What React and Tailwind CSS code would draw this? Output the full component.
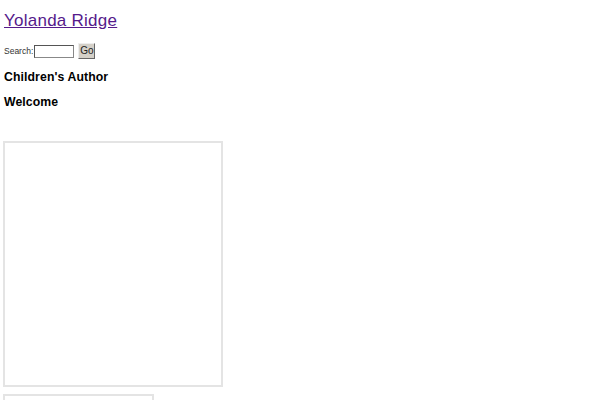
export default function App() {
  return (
    <div className="min-h-[400px] bg-white text-black pl-[4px] pt-[11px] font-['Liberation_Sans',Arial,sans-serif]">
      <h1 className="text-[17px] leading-[20px] font-normal tracking-[0.25px] m-0">
        <a href="#" className="text-[#551a8b] underline">Yolanda Ridge</a>
      </h1>
      <div className="mt-[12px] flex items-center h-[16px] text-[8.5px] text-[#333]">
        <span className="mr-[1px]">Search:</span>
        <input
          type="text"
          className="w-[40px] h-[13px] border border-[#888] border-t-[#555] border-l-[#555] bg-white p-0 outline-none"
        />
        <button className="ml-[4px] w-[17px] h-[16px] bg-[#d4d0c8] border border-t-[#eee] border-l-[#eee] border-b-[#666] border-r-[#666] text-[10px] text-[#222] leading-none p-0">
          Go
        </button>
      </div>
      <h2 className="mt-[10px] text-[12.25px] leading-[16px] font-bold tracking-[0.1px] m-0">Children's Author</h2>
      <h2 className="mt-[9px] text-[12.25px] leading-[16px] font-bold tracking-[0.1px] m-0">Welcome</h2>
      <div className="mt-[31px] -ml-[1px] w-[220px] h-[246px] border-2 border-[#e4e4e4]"></div>
      <div className="mt-[7px] -ml-[1px] w-[151px] h-[20px] border-2 border-[#e4e4e4]"></div>
    </div>
  );
}
